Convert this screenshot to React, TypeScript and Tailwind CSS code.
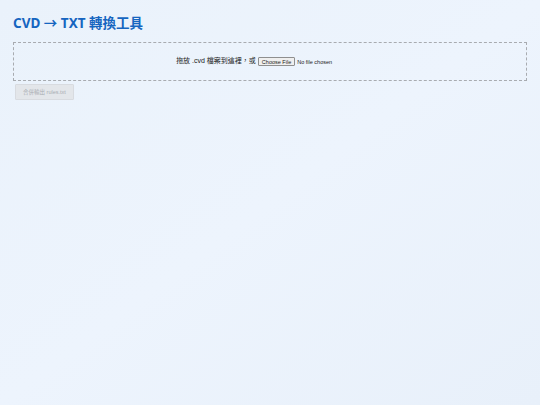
import React, { useState } from 'react';

export default function App() {
  const [files, setFiles] = useState<File[]>([]);

  return (
    <div
      className="min-h-[405px] w-full bg-gradient-to-br from-[#eaf2fb] via-[#edf4fd] to-[#e8f0fa] px-[13px] pt-[13px]"
      style={{ fontFamily: '"Liberation Sans", "Noto Sans CJK TC", sans-serif' }}
    >
      <h1
        className="text-[13.5px] leading-[20px] font-bold text-[#1565c0]"
        style={{ fontFamily: '"Noto Sans", "Noto Sans CJK TC", sans-serif' }}
      >
        CVD → TXT 轉換工具
      </h1>

      <div
        className="mt-[9px] h-[39px] border border-dashed border-[#a8abb0] flex items-center justify-center text-[7px] text-[#222]"
        onDragOver={e => e.preventDefault()}
        onDrop={e => {
          e.preventDefault();
          setFiles(Array.from(e.dataTransfer.files));
        }}
      >
        <span className="mr-[2px]">拖放 .cvd 檔案到這裡，或</span>
        <input
          type="file"
          accept=".cvd"
          className="w-[106px] text-[5.5px] text-[#222] file:mr-[2px] file:h-[9px] file:px-[3px] file:border file:border-[#8f8f8f] file:bg-[#efefef] file:rounded-[1px] file:text-[5.5px] file:text-[#222]"
          onChange={e => setFiles(Array.from(e.target.files ?? []))}
        />
      </div>

      <button
        disabled={files.length === 0}
        className="block mt-[3px] ml-[2px] h-[16px] w-[59px] bg-[#e3e6ea] border border-[#d8dbe0] rounded-[1px] text-[5.5px] text-[#a9adb3]"
      >
        合併輸出 rules.txt
      </button>
    </div>
  );
}
